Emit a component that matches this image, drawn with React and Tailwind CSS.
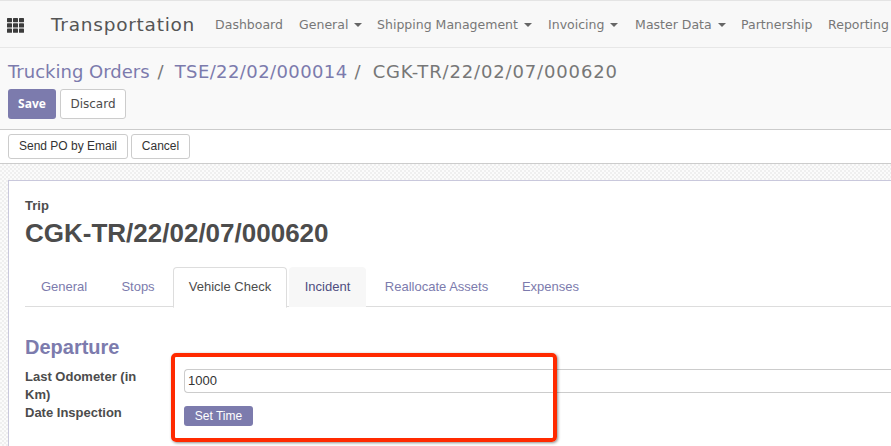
const lucida = "font-['DejaVu_Sans',sans-serif]"

function Caret() {
  return <span className="ml-[6px] inline-block align-middle w-0 h-0 border-x-[4px] border-x-transparent border-t-[4px] border-t-[#666]" />
}

// apps launcher: three rows of three chunky squares
function AppsIcon() {
  const cells = []
  for (const y of [0, 5.3, 10.6]) {
    for (const x of [0, 6, 12]) {
      cells.push(<rect key={`${x}-${y}`} x={x} y={y} width="5" height="4.2" rx="0.6" />)
    }
  }
  return (
    <svg width="17" height="15" viewBox="0 0 17 15" fill="#3c3c3c" className="ml-[7px] shrink-0">
      {cells}
    </svg>
  )
}

const menus = [
  { label: 'Dashboard', w: 'w-[84px]' },
  { label: 'General', caret: true, w: 'w-[78px]' },
  { label: 'Shipping Management', caret: true, w: 'w-[171px]' },
  { label: 'Invoicing', caret: true, w: 'w-[87px]' },
  { label: 'Master Data', caret: true, w: 'w-[106px]' },
  { label: 'Partnership', w: 'w-[87px]' },
  { label: 'Reporting', w: 'w-[70px]' },
]

const tabs = [
  { label: 'General', cls: 'w-[78px] h-[40px] text-[#7c7bad]' },
  { label: 'Stops', cls: 'w-[70px] h-[40px] text-[#7c7bad]' },
  { label: 'Vehicle Check', cls: 'w-[114px] h-[41px] text-[#4c4c4c] bg-white border border-b-white border-[#ddd] rounded-t-[4px]' },
  { label: 'Incident', cls: 'w-[77px] h-[40px] ml-[2px] text-[#4e4d7f] bg-[#f7f7f7] rounded-t-[4px]' },
  { label: 'Reallocate Assets', cls: 'w-[141px] h-[40px] text-[#7c7bad]' },
  { label: 'Expenses', cls: 'w-[87px] h-[40px] text-[#7c7bad]' },
]

export default function App() {
  return (
    <div className="relative w-[891px] h-[446px] overflow-hidden bg-white font-['Liberation_Sans',sans-serif] text-[#4c4c4c]">
      {/* top bar */}
      <div className={`h-[48px] pt-[2px] flex items-center bg-[#f8f8f8] border-t border-t-[#e4e4e4] border-b border-b-[#e7e7e7] whitespace-nowrap ${lucida}`}>
        <AppsIcon />
        <span className="ml-[27px] text-[18.5px] text-[#555] tracking-[0.75px]">Transportation</span>
        <div className="ml-[20px] flex text-[12.5px] text-[#777]">
          {menus.map(m => (
            <span key={m.label} className={`shrink-0 ${m.w}`}>
              {m.label}{m.caret && <Caret />}
            </span>
          ))}
        </div>
      </div>

      {/* control panel */}
      <div className={`h-[82px] bg-[#f9f9f9] border-b border-b-[#ccc] px-[8px] pt-[8px] ${lucida}`}>
        <div className="h-[30px] flex items-center text-[18px] whitespace-nowrap">
          <span className="text-[#7c7bad]">Trucking Orders</span>
          <span className="ml-[8px] text-[#777]">/</span>
          <span className="ml-[11px] text-[#7c7bad] tracking-[0.4px]">TSE/22/02/000014</span>
          <span className="ml-[7px] text-[#777]">/</span>
          <span className="ml-[12px] text-[#777] tracking-[0.85px]">CGK-TR/22/02/07/000620</span>
        </div>
        <div className="mt-[3px] flex gap-[4px] text-[12px]">
          <button className="w-[48px] h-[30px] rounded-[3px] bg-[#7c7bad] text-white font-['Open_Sans',sans-serif] font-bold">Save</button>
          <button className="w-[66px] h-[30px] rounded-[3px] bg-white border border-[#ccc] text-[#4c4c4c]">Discard</button>
        </div>
      </div>

      {/* status bar */}
      <div className="h-[34px] bg-white border-b border-b-[#ccc] px-[8px] flex items-start pt-[4px] gap-[3px] text-[12px]">
        <button className="w-[120px] h-[25px] pb-px rounded-[3px] bg-white border border-[#ccc] text-[#333]">Send PO by Email</button>
        <button className="w-[59px] h-[25px] pb-px rounded-[3px] bg-white border border-[#ccc] text-[#333]">Cancel</button>
      </div>

      {/* form sheet */}
      <div className="h-[283px] pl-[8px] pt-[16px] bg-[repeating-conic-gradient(#efefef_0_25%,#fbfbfb_0_50%)] bg-[length:4px_4px]">
        <div className="h-[270px] bg-white border-t border-l border-[#c9c8dc] pl-[16px] pt-[17px]">
          <div className="text-[13px] font-bold leading-[15px]">Trip</div>
          <h1 className="mt-[5px] text-[26px] font-bold leading-[30px]">CGK-TR/22/02/07/000620</h1>

          <div className="mt-[19px] h-[40px] flex border-b border-b-[#ddd] text-[13px]">
            {tabs.map(t => (
              <div key={t.label} className={`shrink-0 pb-[1px] flex items-center justify-center ${t.cls}`}>{t.label}</div>
            ))}
          </div>

          <h2 className="mt-[29px] text-[20px] font-bold leading-[23px] text-[#7c7bad]">Departure</h2>
          <div className="mt-[9px] flex">
            <div className="w-[159px] shrink-0 text-[13px] font-bold leading-[18px]">
              <div className="w-[125px]">Last Odometer (in Km)</div>
              <div>Date Inspection</div>
            </div>
            <div className="flex-1">
              <input
                readOnly
                value="1000"
                className="w-full h-[24px] rounded-l-[4px] border border-[#ccc] border-r-0 pl-[3px] text-[13px] text-[#333] outline-none"
              />
              <button className="mt-[13px] block w-[69px] h-[20px] rounded-[3px] bg-[#7c7bad] text-white text-[12px]">Set Time</button>
            </div>
          </div>
        </div>
      </div>

      {/* annotation over the screenshot */}
      <div className="absolute left-[171px] top-[353px] w-[386px] h-[89px] border-[4px] border-[#ff2a00] rounded-[5px] shadow-[1px_1px_3px_rgba(0,0,0,0.45)]" />
    </div>
  )
}
